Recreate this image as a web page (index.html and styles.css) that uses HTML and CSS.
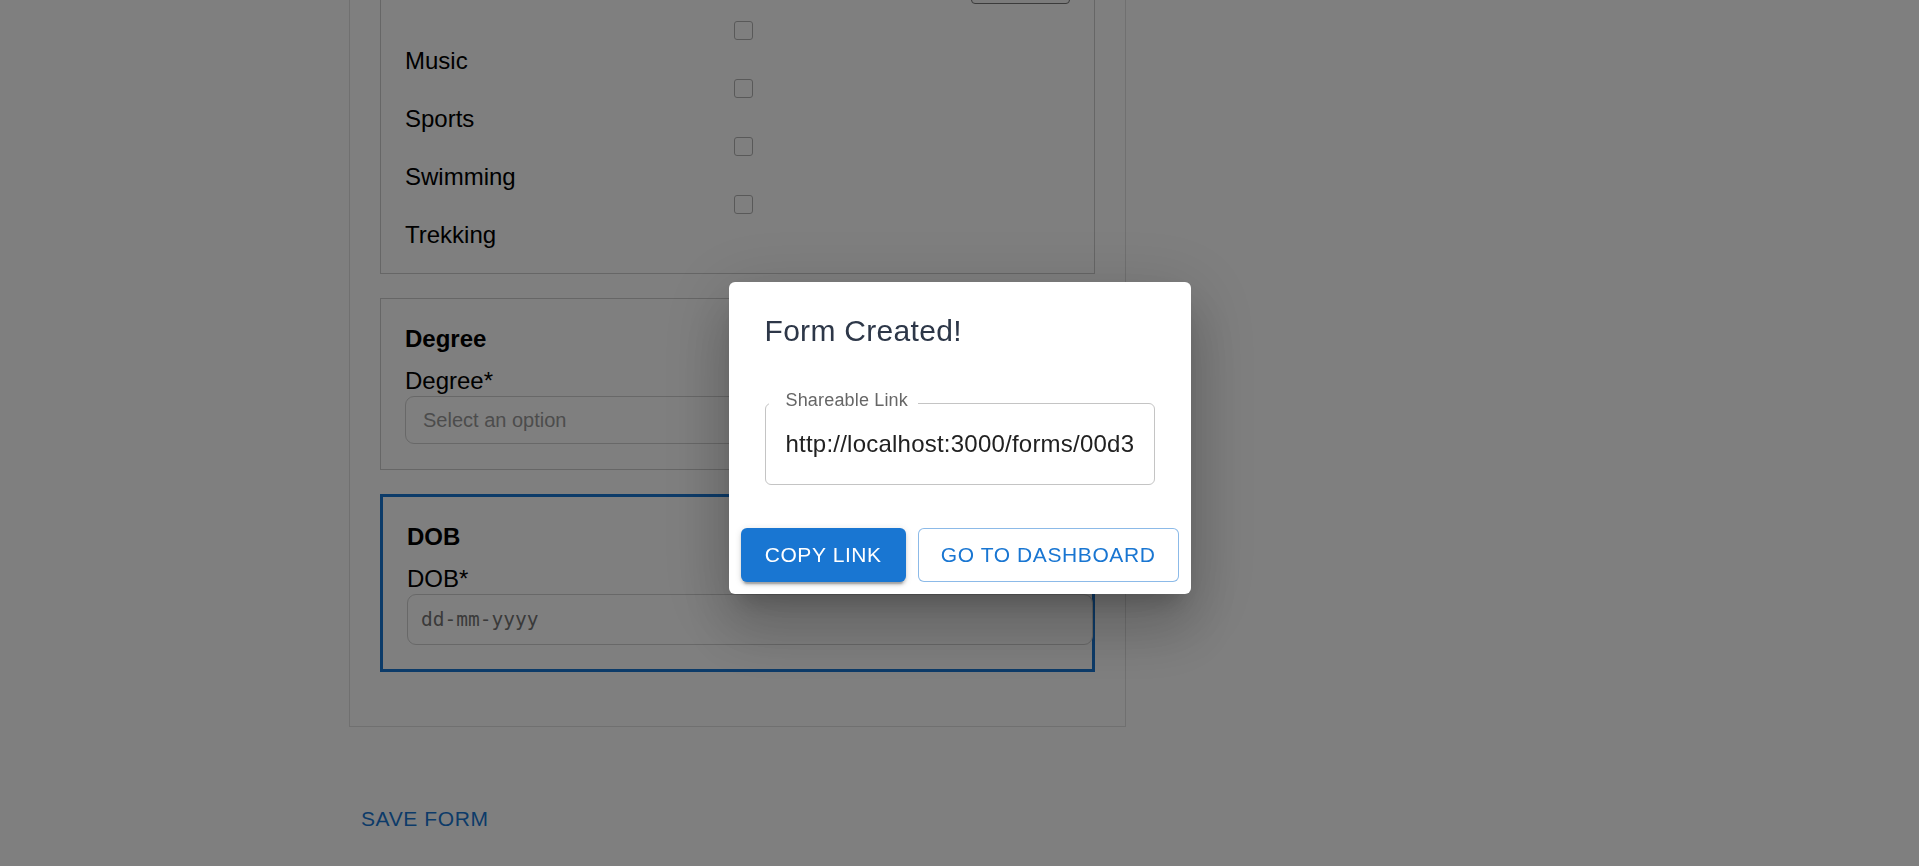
FILE: index.html
```html
<!DOCTYPE html>
<html lang="en">
<head>
<meta charset="utf-8">
<title>Form Builder</title>
<link rel="stylesheet" href="styles.css">
</head>
<body>
<main class="page">
  <div class="form-box">
    <section class="card card-hobbies">
      <div class="card-head">
        <button class="remove-btn" type="button" aria-label="Remove field"></button>
      </div>
      <ul class="options">
        <li class="option"><span class="check"></span><span class="option-label">Music</span></li>
        <li class="option"><span class="check"></span><span class="option-label">Sports</span></li>
        <li class="option"><span class="check"></span><span class="option-label">Swimming</span></li>
        <li class="option"><span class="check"></span><span class="option-label">Trekking</span></li>
      </ul>
    </section>
    <section class="card">
      <h3 class="card-title">Degree</h3>
      <label class="field-label">Degree*</label>
      <div class="field-select">Select an option</div>
    </section>
    <section class="card card-active">
      <h3 class="card-title">DOB</h3>
      <label class="field-label">DOB*</label>
      <div class="field-date">dd-mm-yyyy</div>
    </section>
  </div>
  <button class="save-btn" type="button">SAVE FORM</button>
</main>

<div class="dialog-layer">
  <div class="dialog" role="dialog">
    <h2 class="dialog-title">Form Created!</h2>
    <div class="dialog-content">
      <div class="link-field">
        <input class="link-input" type="text" readonly value="http://localhost:3000/forms/00d3a7e2-6c4f-4a1e-9f2b-3d8c1b7e5a90">
        <span class="link-label">Shareable Link</span>
      </div>
    </div>
    <div class="dialog-actions">
      <button class="btn btn-contained" type="button">Copy Link</button>
      <button class="btn btn-outlined" type="button">Go to Dashboard</button>
    </div>
  </div>
</div>
</body>
</html>
```

FILE: styles.css
```css
* { box-sizing: border-box; }

html, body {
  margin: 0;
  height: 100%;
  overflow: hidden;
}

body {
  font-family: "Liberation Sans", Arial, sans-serif;
  background: #ffffff;
  color: #000000;
}

.page {
  margin-top: -100px;
  padding-left: 349px;
}

.form-box {
  width: 777px;
  border: 1px solid #e0e0e0;
  padding: 30px 30px 30px;
}

.card {
  border: 1px solid #cccccc;
  padding: 24px 24px 25px;
  margin-bottom: 24px;
}

.card-hobbies { padding-bottom: 23px; }

.card-active {
  border: 3px solid #1976d2;
  padding-bottom: 24px;
}

.card-title {
  margin: 0 0 10.5px;
  font-size: 24px;
  font-weight: 700;
  line-height: 31.2px;
}

.card-head {
  display: flex;
  justify-content: flex-end;
  align-items: flex-end;
  height: 48px;
  margin-bottom: 14px;
}

.remove-btn {
  width: 99px;
  height: 40px;
  border: 1.5px solid #767676;
  border-radius: 4px;
  background: #f7f7f7;
}

.options {
  list-style: none;
  margin: 0;
  padding: 0;
}

.option {
  display: flex;
  flex-direction: column;
  align-items: flex-start;
}

.check {
  width: 19px;
  height: 19px;
  margin: 3px 0 5px 329px;
  border: 1.5px solid #b2b2b2;
  border-radius: 3px;
  background: #ffffff;
}

.option-label {
  font-size: 24px;
  line-height: 31px;
}

.field-label {
  display: block;
  font-size: 24px;
  line-height: 31.2px;
}

.field-select {
  width: calc(100% + 26px);
  height: 48px;
  border: 1px solid #d0d0d0;
  border-radius: 9px;
  padding: 0 12px 0 17px;
  font-size: 20px;
  line-height: 46px;
  color: #999999;
  background: #ffffff;
}

.field-date {
  width: calc(100% + 25px);
  height: 51px;
  border: 1px solid #d0d0d0;
  border-radius: 9px;
  padding: 0 12px 0 13px;
  font-family: "DejaVu Sans Mono", "Liberation Mono", monospace;
  font-size: 19.5px;
  line-height: 49px;
  color: #757575;
  background: #ffffff;
}

.save-btn {
  margin-top: 65px;
  padding: 9px 12px;
  border: 0;
  background: transparent;
  font: 21px/36.75px "Liberation Sans", Arial, sans-serif;
  letter-spacing: 0.6px;
  color: #1976d2;
}

/* dialog */
.dialog-layer {
  position: fixed;
  inset: 0;
  display: flex;
  align-items: center;
  justify-content: center;
  padding-top: 10px;
  background: rgba(0, 0, 0, 0.5);
}

.dialog {
  width: 462px;
  background: #ffffff;
  border-radius: 6px;
  box-shadow:
    0 16.5px 22.5px -10.5px rgba(0, 0, 0, 0.2),
    0 36px 57px 4.5px rgba(0, 0, 0, 0.14),
    0 13.5px 69px 12px rgba(0, 0, 0, 0.12);
}

.dialog-title {
  margin: 0;
  padding: 25px 36px 23px 36px;
  font-size: 30px;
  font-weight: 400;
  line-height: 48px;
  letter-spacing: 0.3px;
  color: #2d3748;
}

.dialog-content {
  padding: 25px 36px 31px;
}

.link-field {
  position: relative;
}

.link-input {
  display: block;
  width: 100%;
  height: 82px;
  border: 1px solid #c4c4c4;
  border-radius: 6px;
  padding: 0 20px;
  font: 24px "Liberation Sans", Arial, sans-serif;
  letter-spacing: 0.225px;
  color: #212121;
  background: #ffffff;
  outline: none;
}

.link-label {
  position: absolute;
  top: -12px;
  left: 4px;
  padding: 0 10px 0 17px;
  background: #ffffff;
  font-size: 18px;
  line-height: 18px;
  letter-spacing: 0.17px;
  color: #666666;
}

.dialog-actions {
  display: flex;
  justify-content: flex-end;
  gap: 12px;
  padding: 12px;
}

.btn {
  font: 21px/36px "Liberation Sans", Arial, sans-serif;
  letter-spacing: 0.6px;
  text-transform: uppercase;
  border-radius: 6px;
  cursor: pointer;
}

.btn-contained {
  padding: 9px 24px;
  border: 0;
  background: #1976d2;
  color: #ffffff;
  box-shadow:
    0 4.5px 1.5px -3px rgba(0, 0, 0, 0.2),
    0 3px 3px 0 rgba(0, 0, 0, 0.14),
    0 1.5px 7.5px 0 rgba(0, 0, 0, 0.12);
}

.btn-outlined {
  padding: 8px 22px;
  border: 1px solid rgba(25, 118, 210, 0.5);
  background: #ffffff;
  color: #1976d2;
}
```
